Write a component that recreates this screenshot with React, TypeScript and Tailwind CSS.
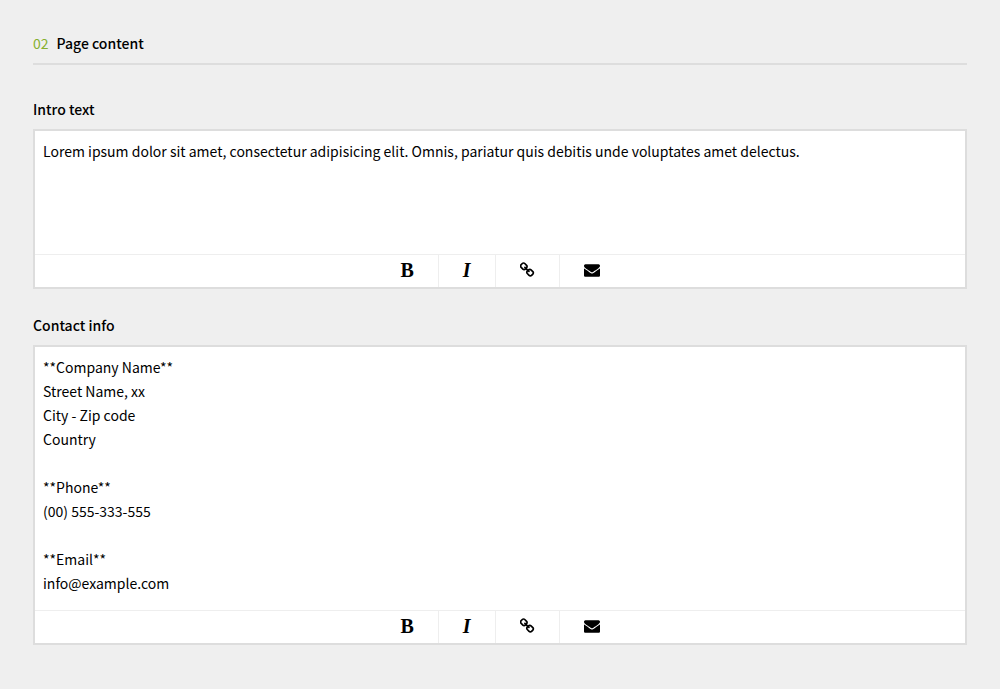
import React, { useState } from 'react';

interface MarkdownFieldProps {
  id: string;
  label: string;
  initialValue: string;
  areaClassName: string;
}

const LinkIcon: React.FC<{ className?: string }> = ({ className }) => (
  <svg viewBox="64 0 1664 1792" fill="currentColor" className={className} aria-hidden="true">
    <path d="M1456 1216q0-40-28-68l-208-208q-28-28-68-28-42 0-72 32 3 3 19 18.5t21.5 21.5 15 19 13 25.5 3.5 27.5q0 40-28 68t-68 28q-15 0-27.5-3.5t-25.5-13-19-15-21.5-21.5-18.5-19q-33 31-33 73 0 40 28 68l206 207q27 27 68 27 40 0 68-26l147-146q28-28 28-67zm-703-705q0-40-28-68l-206-207q-28-28-68-28-39 0-68 27l-147 146q-28 28-28 67 0 40 28 68l208 208q27 27 68 27 42 0 72-31-3-3-19-18.5t-21.5-21.5-15-19-13-25.5-3.5-27.5q0-40 28-68t68-28q15 0 27.5 3.5t25.5 13 19 15 21.5 21.5 18.5 19q33-31 33-73zm895 705q0 120-85 203l-147 146q-83 83-203 83-121 0-204-85l-206-207q-83-83-83-203 0-123 88-209l-88-88q-86 88-208 88-120 0-204-84l-208-208q-84-84-84-204t85-203l147-146q83-83 203-83 121 0 204 85l206 207q83 83 83 203 0 123-88 209l88 88q86-88 208-88 120 0 204 84l208 208q84 84 84 204z" />
  </svg>
);

const EnvelopeIcon: React.FC<{ className?: string }> = ({ className }) => (
  <svg viewBox="0 0 1792 1792" fill="currentColor" className={className} aria-hidden="true">
    <path d="M1792 710v794q0 66-47 113t-113 47h-1472q-66 0-113-47t-47-113v-794q44 49 101 87 362 246 497 345 57 42 92.5 65.5t94.5 48 110 24.5h2q51 0 110-24.5t94.5-48 92.5-65.5q170-123 498-345 57-39 100-87zm0-294q0 79-49 151t-122 123q-376 261-468 325-10 7-42.5 31t-54 38.5-52 32.5-57.5 27-50 9h-2q-23 0-50-9t-57.5-27-52-32.5-54-38.5-42.5-31q-91-64-262-182.5t-205-142.5q-62-42-117-115.5t-55-136.5q0-78 41.5-130t118.5-52h1472q65 0 112.5 47t47.5 113z" />
  </svg>
);

const MarkdownField: React.FC<MarkdownFieldProps> = ({ id, label, initialValue, areaClassName }) => {
  const [value, setValue] = useState(initialValue);

  // Append a markdown snippet at the end of the text
  const append = (snippet: string) => setValue((current) => current + snippet);

  return (
    <div>
      <label htmlFor={id} className="block mb-2 font-medium">{label}</label>
      <div className="bg-white border-2 border-[#ddd]">
        <textarea
          id={id}
          value={value}
          onChange={(e) => setValue(e.target.value)}
          className={`block w-full px-2 pt-2 resize-none outline-none ${areaClassName}`}
        />
        {/* Toolbar */}
        <div className="flex justify-center h-[33px] border-t border-[#eee] divide-x divide-[#eee]">
          <button
            type="button"
            aria-label="Bold"
            onClick={() => append('****')}
            className="flex items-center px-6 pb-0.5 font-['Liberation_Serif',serif] text-xl leading-none font-bold"
          >
            B
          </button>
          <button
            type="button"
            aria-label="Italic"
            onClick={() => append('**')}
            className="flex items-center px-6 pb-0.5 font-['Liberation_Serif',serif] text-xl leading-none font-bold italic"
          >
            I
          </button>
          <button
            type="button"
            aria-label="Link"
            onClick={() => append('[]()')}
            className="flex items-center px-6 pb-0.5"
          >
            <LinkIcon className="w-[15px] h-4" />
          </button>
          <button
            type="button"
            aria-label="Email"
            onClick={() => append('<>')}
            className="flex items-center px-6 pb-0.5"
          >
            <EnvelopeIcon className="w-4 h-4" />
          </button>
        </div>
      </div>
    </div>
  );
};

const contactInfo = `**Company Name**
Street Name, xx
City - Zip code
Country

**Phone**
(00) 555-333-555

**Email**
info@example.com`;

const App: React.FC = () => {
  return (
    <main className="min-h-screen bg-[#efefef] px-[33px] pt-[31px] pb-8 font-['Noto_Sans_CJK_SC',sans-serif] text-sm leading-6 text-black">
      {/* Section header */}
      <h2 className="flex gap-2 mb-8 pb-2 border-b-2 border-[#ddd] font-medium">
        <span className="font-normal text-[#86b030]">02</span>
        Page content
      </h2>

      <form className="flex flex-col gap-6">
        <MarkdownField
          id="intro"
          label="Intro text"
          initialValue="Lorem ipsum dolor sit amet, consectetur adipisicing elit. Omnis, pariatur quis debitis unde voluptates amet delectus."
          areaClassName="h-[123px]"
        />
        <MarkdownField id="contact" label="Contact info" initialValue={contactInfo} areaClassName="h-[263px]" />
      </form>
    </main>
  );
};

export default App;
